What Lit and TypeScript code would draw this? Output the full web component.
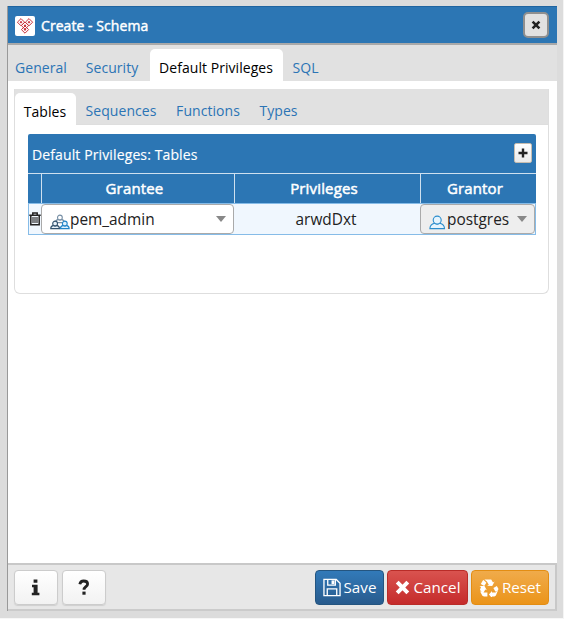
import { LitElement, html, css, svg } from "lit";
import { customElement } from "lit/decorators.js";

const tile = (x: number, y: number) => svg`<path d="M${x} ${y - 3.6}l3.6 3.6-3.6 3.6-3.6-3.6z"/><path fill="#c8323c" stroke="none" d="M${x} ${y - 1.4}l1.4 1.4-1.4 1.4-1.4-1.4z"/>`;
const logo = svg`<g fill="none" stroke="#c8323c" stroke-width="1">${tile(5, 5.2)}${tile(13, 5.2)}${tile(9, 8.6)}${tile(9, 12.6)}</g>`;

const person = (x: number, y: number, s: number, c: string, f: string) => svg`
  <g transform="translate(${x} ${y}) scale(${s})" fill=${f} stroke=${c} stroke-width=${1.1 / s}>
    <path d="M.7 13.3C.8 10.3 2.6 8.6 5.3 8Q8 9.5 10.7 8C13.4 8.6 15.2 10.3 15.3 13.3Z"/>
    <circle cx="8" cy="4.8" r="4"/>
  </g>`;

@customElement("app-root")
export class AppRoot extends LitElement {
  static styles = css`
    * { box-sizing: border-box; }
    :host {
      display: block; width: 564px; height: 619px; overflow: hidden;
      background: #dcdcdc; padding: 6px 6px 0 7px;
      border-right: 1px solid #f4f4f4; border-bottom: 1px solid #f7f7f7;
      font: 14px "Open Sans", "Noto Sans", sans-serif; color: #222; box-sizing: border-box;
    }
    svg { display: block; flex: none; }
    .dialog { width: 550px; height: 605px; display: flex; flex-direction: column; background: #fff; border-left: 1px solid #999; }
    .title {
      height: 39px; flex: none; display: flex; align-items: center; padding: 0 8px 0 7px;
      background: #2c76b4; border-top: 1px solid #1f64a0; border-bottom: 2px solid #a9a9a9; color: #fff;
    }
    .logo { width: 20px; height: 20px; background: #fff; border-radius: 2px; padding: 1px; margin-top: 2px; }
    .title-text { flex: 1; margin-left: 6px; letter-spacing: .06px; -webkit-text-stroke: .45px #fff; }
    .close {
      width: 26px; height: 26px; border: 2px solid #8f8f8f; border-radius: 5px; background: #e1e1e1;
      display: grid; place-items: center;
    }
    .tabs { display: flex; align-items: flex-end; height: 36px; flex: none; background: #e1e1e1; color: #2b74b5; }
    .tab { height: 32px; display: flex; align-items: center; justify-content: center; padding: 4px 0 0 0; letter-spacing: .05px; white-space: nowrap; border-radius: 5px 5px 0 0; }
    .tab.active { background: #fff; color: #000; }
    .general { width: 66px; }
    .security { width: 76px; }
    .defaults { width: 133px; padding-right: 1px; }
    .sql { width: 45px; }
    .body { flex: 1; padding: 8px 8px 0 6px; }
    .panel { height: 205px; border: 1px solid #dedede; border-top: 0; border-radius: 0 0 6px 6px; }
    .panel .tabs { border-bottom: 1px solid #dedede; }
    .panel .tab { padding: 5px 1px 0 0; }
    .panel .tab.active { height: 32px; margin-bottom: -1px; }
    .tables { width: 61px; }
    .sequences { width: 91px; }
    .functions { width: 83px; }
    .types { width: 58px; }
    .grid { margin: 9px 0 0 13px; width: 508px; }
    .grid-title {
      height: 39px; display: flex; align-items: center; justify-content: space-between; padding: 0 4px 0 4px;
      background: #2c76b4; color: #fff; border-radius: 2px 2px 0 0; -webkit-text-stroke: .15px #fff;
    }
    .grid-title span { letter-spacing: .12px; padding-top: 1px; }
    .add { width: 18px; height: 20px; margin-top: -2px; background: linear-gradient(#fff, #eaeaea); border: 1px solid #c7bdb0; border-radius: 2px; display: grid; place-items: center; }
    .row { display: grid; grid-template-columns: 13px 193px 186px 116px; }
    .head { height: 30px; background: #2c76b4; border-top: 1px solid #cfe0ef; color: #fff; font-size: 15px; letter-spacing: .16px; -webkit-text-stroke: .5px #fff; }
    .head > div { display: flex; align-items: center; justify-content: center; padding: 0 7px 1px 0; }
    .head > div + div { border-left: 1px solid #cfe0ef; }
    .data { height: 32px; background: #f0f7fe; border: 1px solid #86bce8; font-size: 15.4px; grid-template-columns: 12px 193px 186px 115px; }
    .cell { display: flex; align-items: center; justify-content: center; }
    .cell.text { padding: 0 2px 0 0; }
    .cell svg { margin-left: -1px; }
    .select { display: flex; align-items: center; height: 30px; border: 1px solid #aaa; border-radius: 4px; background: #fff; padding: 0 7px 0 8px; }
    .select.disabled { background: #eee; padding-left: 7px; }
    .select svg { margin-top: 6px; }
    .value { flex: 1; padding-top: 1px; }
    .caret { width: 0; height: 0; border: 5px solid transparent; border-top: 6px solid #888; border-bottom: 0; }
    .footer {
      height: 48px; flex: none; display: flex; align-items: flex-start; gap: 3px; padding: 5px 6px 0;
      background: #e7e7e7; border: 2px solid #c8c8c8; border-left: 0; border-bottom-color: #cbcbcb;
    }
    .btn {
      height: 35px; display: flex; align-items: center; justify-content: center; border-radius: 4px;
      border: 1px solid #ccc; background: linear-gradient(#fff, #f2f2f2); color: #fff; white-space: nowrap; font-size: 15.2px;
    }
    .btn span { padding-bottom: 1px; }
    .square { width: 44px; box-shadow: 0 1px 1px #cfcfcf; }
    .square + .square { margin-left: 1px; }
    .spacer { flex: 1; }
    .save { width: 69px; background: linear-gradient(#327ab9, #285b8d); border-color: #245580; gap: 3px; }
    .cancel { width: 81px; background: linear-gradient(#d9534f, #c52b2b); border-color: #b92c28; gap: 4px; }
    .reset { width: 78px; background: linear-gradient(#f0ab4b, #eb9419); border-color: #e38d13; gap: 3px; }
  `;

  render() {
    return html`
      <div class="dialog">
        <div class="title">
          <div class="logo"><svg width="18" height="18" viewBox="0 0 18 18">${logo}</svg></div>
          <div class="title-text">Create - Schema</div>
          <div class="close">
            <svg width="10" height="10" viewBox="0 0 10 10"><path d="M1.6 1.6l6.8 6.8M8.4 1.6l-6.8 6.8" stroke="#222" stroke-width="2.6"/></svg>
          </div>
        </div>
        <div class="tabs">
          <div class="tab general">General</div>
          <div class="tab security">Security</div>
          <div class="tab active defaults">Default Privileges</div>
          <div class="tab sql">SQL</div>
        </div>
        <div class="body">
          <div class="panel">
            <div class="tabs">
              <div class="tab active tables">Tables</div>
              <div class="tab sequences">Sequences</div>
              <div class="tab functions">Functions</div>
              <div class="tab types">Types</div>
            </div>
            <div class="grid">
              <div class="grid-title">
                <span>Default Privileges: Tables</span>
                <div class="add"><svg width="10" height="10" viewBox="0 0 10 10"><path d="M5 .5v9M.5 5h9" stroke="#222" stroke-width="2.4"/></svg></div>
              </div>
              <div class="row head"><div></div><div>Grantee</div><div>Privileges</div><div>Grantor</div></div>
              <div class="row data">
                <div class="cell">
                  <svg width="12" height="14" viewBox="0 0 12 14"><g fill="none" stroke="#222" stroke-width="1.5"><path d="M.3 3.2h11.4M3.8 3V1.1h4.4V3M1.8 3.5v9.3h8.4V3.5"/><path stroke-width="1.1" d="M4 5v6M6 5v6M8 5v6"/></g></svg>
                </div>
                <div class="select">
                  <svg width="20" height="16" viewBox="0 0 20 16">${person(5.1, 0.6, 0.6, "#7890a6", "#fff")}${person(0.3, 6.6, 0.6, "#33536e", "#eaf3fa")}${person(10, 6.6, 0.6, "#2385c8", "#e2f2fd")}</svg>
                  <span class="value">pem_admin</span><span class="caret"></span>
                </div>
                <div class="cell text">arwdDxt</div>
                <div class="select disabled">
                  <svg width="19" height="15" viewBox="0 0 19 15">${person(1.2, 0.3, 1, "#2b8dcc", "#e6f4fd")}</svg>
                  <span class="value">postgres</span><span class="caret"></span>
                </div>
              </div>
            </div>
          </div>
        </div>
        <div class="footer">
          <div class="btn square"><svg width="10" height="17" viewBox="0 0 10 17"><path fill="#222" d="M2.6.5h3.8v3.2H2.6zM1 5.7h5.6v8h1.8v2.6H.8v-2.6h1.8V8.3H1z"/></svg></div>
          <div class="btn square"><svg width="12" height="17" viewBox="0 0 12 17"><path fill="none" stroke="#222" stroke-width="2.8" d="M1.8 5.2C2.3 3 3.7 2 5.6 2c2.3 0 4 1.1 4 3 0 2.7-3.6 2.7-3.6 5.8"/><path fill="#222" d="M4.4 12.6h3.2v3.1H4.4z"/></svg></div>
          <div class="spacer"></div>
          <div class="btn save"><svg width="18" height="19" viewBox="0 0 19 19"><g fill="none" stroke="#fff" stroke-width="1.4"><path d="M1 1h13l4 4v13H1zM4.5 18v-7h10v7M5 1v6h8V1"/></g><path fill="#fff" d="M9 2h3v4H9z"/></svg><span>Save</span></div>
          <div class="btn cancel"><svg width="15" height="15" viewBox="0 0 15 15"><path d="M2.2 2.2l10.6 10.6M12.8 2.2L2.2 12.8" stroke="#fff" stroke-width="4"/></svg><span>Cancel</span></div>
          <div class="btn reset"><svg width="20" height="19" viewBox="-10 -10 20 19"><g fill="#fff"><path id="arm" d="M-4.6-8.6H2.2L4-5.6l1.6-.9L3.2-2-1.9-2.2l1.7-1-1.9-3.2z"/><path d="M-5.4-8-2.7-5.2-4.8-1.9-8.2-3.9-6.2-7.4z"/><path d="M-9.6-1.9-4.5-2-2.2 2.3l-1.5-.8L-6.2 6-9 1.7l1-2.8z"/><path d="M-9 3.2-6.2 4.6h4.6v4H-5L-6.6 7.8z"/><path d="M8.9 2.6 6.9 7.4 5.4 8.6H3V10L-.1 6.5 3 3.1v1.5h3.5z"/><path d="M4.4 0 7.8-2 9.5.9 8.2 3.4H6.3z"/></g></svg><span>Reset</span></div>
        </div>
      </div>
    `;
  }
}
